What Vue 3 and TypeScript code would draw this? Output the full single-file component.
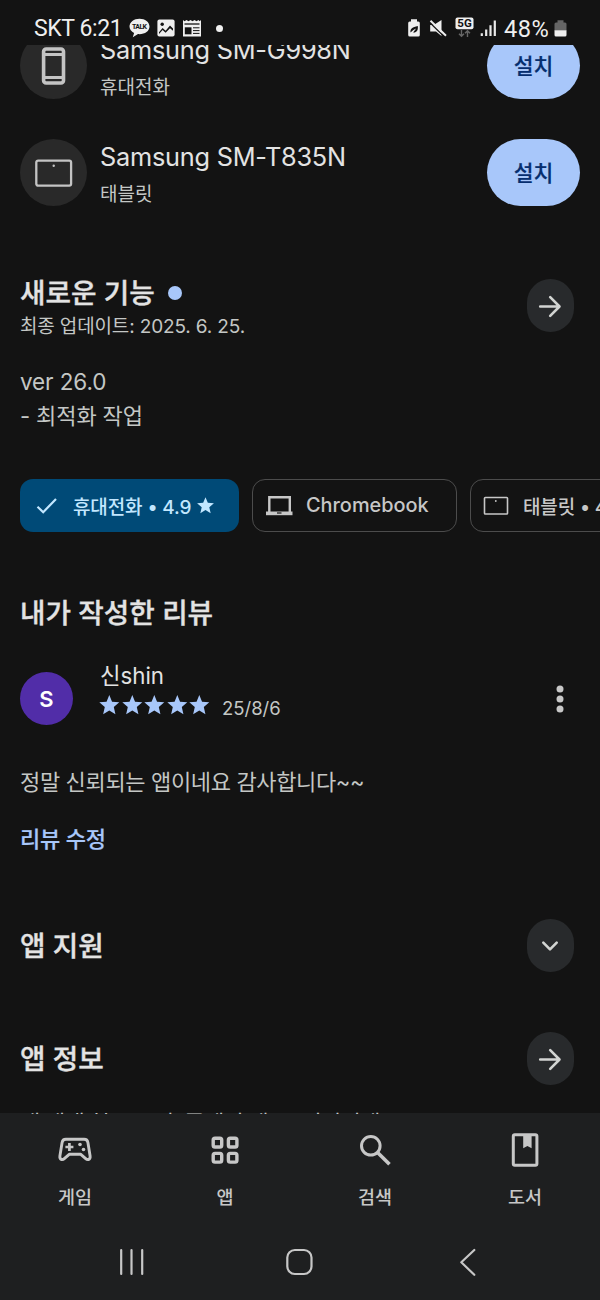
<script setup lang="ts">
interface Device {
  name: string
  kind: string
  icon: 'phone' | 'tablet'
}

interface NavItem {
  label: string
  icon: 'games' | 'apps' | 'search' | 'books'
}

const devices: Device[] = [
  { name: 'Samsung SM-G998N', kind: '휴대전화', icon: 'phone' },
  { name: 'Samsung SM-T835N', kind: '태블릿', icon: 'tablet' },
]

const navItems: NavItem[] = [
  { label: '게임', icon: 'games' },
  { label: '앱', icon: 'apps' },
  { label: '검색', icon: 'search' },
  { label: '도서', icon: 'books' },
]

const star = 'M12 1.200l3 7.200 7.900.7-6 5.200 1.800 7.700-6.700-4.100-6.700 4.100 1.800-7.700-6-5.200 7.900-.7z'
</script>

<template>
  <div class="screen">
    <header class="status">
      <span class="clock">SKT 6:21</span>
      <svg class="s-talk" width="21" height="21" viewBox="0 0 21 21">
        <path d="M10.500 .8C4.900 .8 .5 4.200 .5 8.500c0 2.800 1.900 5.200 4.600 6.500L3.800 19.300l5.200-3.200c6.300.6 11.500-2.800 11.500-7.600C20.500 4.200 16.100 .8 10.500 .8z" fill="#efefef" />
        <text x="10.500" y="10.800" text-anchor="middle" textLength="15" class="talk">TALK</text>
      </svg>
      <svg class="s-img" width="18" height="18" viewBox="0 0 18 18">
        <rect x=".4" y=".5" width="17.200" height="17" rx="2" fill="#efefef" />
        <circle cx="5.200" cy="5.300" r="1.700" fill="#131313" />
        <path d="M2 13.200l3.600-4.200 3 2.800 4.400-5.300 3 3v2.300l-3-2.600-4.400 4.500-3-2.700L2 14.900z" fill="#131313" />
      </svg>
      <svg class="s-news" width="20" height="18" viewBox="0 0 20 18">
        <path d="M1 1l1.500 1.200L4.500 1l2 1.200L8.500 1l2 1.200L12.500 1l2 1.200L16.500 1l1.200 1.200L19 1v16.500H1z" fill="#efefef" />
        <path d="M2.500 5h15" stroke="#131313" stroke-width="1.300" />
        <path d="M2.800 8.300h6.700v7H2.800z" fill="#131313" />
        <path d="M11 8.800h6.500M11 11.600h6.500M11 14.400h6.500" stroke="#131313" stroke-width="1" />
      </svg>
      <i class="s-dot"></i>
      <svg class="s-leaf" width="14" height="18" viewBox="0 0 14 18">
        <path d="M4 .3h6v2.200h1.300q1.500 0 1.500 1.500v12q0 1.500-1.500 1.500H2.700q-1.500 0-1.500-1.500V4q0-1.500 1.500-1.500H4z" fill="#efefef" />
        <path d="M3.500 13.500c-.5-3.800 2-5.500 7.300-6.500.6 4.500-1.500 7-4.700 6.500 1-1.500 2-2.500 3-4-2 .8-3.500 2-5.600 4z" fill="#131313" />
      </svg>
      <svg class="s-mute" width="18" height="18" viewBox="0 0 18 18">
        <path d="M1.200 6h3.500L12.500 1v16L7 12.500H1.200z" fill="#efefef" />
        <path d="M.8 3.500L15 17.500" stroke="#131313" stroke-width="1.300" />
        <path d="M1.500 1.700L17 16.800" stroke="#efefef" stroke-width="2" />
      </svg>
      <svg class="s-5g" width="19" height="21" viewBox="0 0 19 21">
        <rect x=".5" y=".5" width="18" height="11.700" rx="2" fill="#efefef" />
        <text x="9.500" y="10.300" text-anchor="middle" class="fiveg">5G</text>
        <path d="M6.500 13v6M4 16.700l2.500 2.500L9 16.700M12.500 20v-6M10 16.300l2.500-2.500 2.500 2.500" stroke="#666" stroke-width="1.400" fill="none" />
      </svg>
      <svg class="s-signal" width="17" height="17" viewBox="0 0 17 17">
        <path d="M1.800 13.300V16M6.200 9.500V16M10.500 5.300V16M14.800 .5V16" stroke="#e8e8e8" stroke-width="2.200" />
      </svg>
      <span class="percent">48%</span>
      <svg class="s-batt" width="13" height="17" viewBox="0 0 13 17">
        <path d="M3.500 .3h6v2.200H11q1.500 0 1.500 1.500v6.500H.5V4q0-1.500 1.500-1.500h1.500z" fill="#666" />
        <path d="M.5 10.300h12V15q0 1.500-1.500 1.500H2Q.5 16.500 .5 15z" fill="#efefef" />
      </svg>
    </header>

    <main class="content">
      <ul class="devices">
        <li v-for="d in devices" :key="d.name" class="device">
          <span class="round">
            <svg v-if="d.icon === 'phone'" width="28" height="38" viewBox="0 0 28 38">
              <rect x="3.600" y="2" width="19.900" height="34" rx="2.500" fill="none" stroke="#c4c4c4" stroke-width="3.600" />
              <path d="M3.500 7.500h20M3.500 30.500h20" stroke="#c4c4c4" stroke-width="3" />
            </svg>
            <svg v-else width="38" height="28" viewBox="0 0 38 28">
              <rect x="1.300" y="1.600" width="34.800" height="25" rx="1.800" fill="none" stroke="#c4c4c4" stroke-width="2.300" />
              <circle cx="18.700" cy="6.800" r="1.200" fill="#c4c4c4" />
            </svg>
          </span>
          <div class="device-text">
            <div class="device-name">{{ d.name }}</div>
            <div class="device-kind">{{ d.kind }}</div>
          </div>
          <button class="install">설치</button>
        </li>
      </ul>

      <section class="news">
        <div class="news-head">
          <div>
            <h2 class="title">새로운 기능<i class="blue-dot"></i></h2>
            <p class="updated">최종 업데이트: 2025. 6. 25.</p>
          </div>
          <button class="pill">
            <svg width="24" height="24" viewBox="0 0 24 24"><path d="M2.200 12.500h19M12.200 3.200l9.300 9.300-9.300 9.300" /></svg>
          </button>
        </div>
        <p class="notes"><span class="version">ver 26.0</span><br />- 최적화 작업</p>
      </section>

      <div class="chips">
        <div class="chip selected">
          <svg class="c-check" width="22" height="18" viewBox="0 0 22 18"><path d="M1.500 9.700l5.700 5.500L20 2" fill="none" stroke="#c2e7ff" stroke-width="2.200" /></svg>
          <span>휴대전화 <b class="bullet">•</b> 4.9</span>
          <svg class="c-star" width="17" height="17" viewBox="1 1 22 22"><path :d="star" fill="#c2e7ff" /></svg>
        </div>
        <div class="chip chrome">
          <svg width="28" height="22" viewBox="0 0 28 22">
            <path d="M4.300 17V2.300h20.500V17" fill="none" stroke="#c7c7c7" stroke-width="2.400" />
            <path d="M1 16.500h26.500v3.700H1z" fill="#c7c7c7" /><path d="M12 18h4.500" stroke="#131313" stroke-width="1.200" />
          </svg>
          <span>Chromebook</span>
        </div>
        <div class="chip tablet">
          <svg width="26" height="20" viewBox="0 0 26 20">
            <rect x="1.500" y="1.500" width="23" height="16.500" rx=".8" fill="none" stroke="#c7c7c7" stroke-width="1.600" />
            <circle cx="12.800" cy="5" r=".9" fill="#c7c7c7" />
          </svg>
          <span>태블릿 <b class="bullet">•</b> 4.8</span>
        </div>
      </div>

      <section class="review">
        <h2 class="title">내가 작성한 리뷰</h2>
        <div class="author">
          <span class="avatar">S</span>
          <div class="who">
            <div class="nick">신shin</div>
            <div class="rating">
              <svg v-for="n in 5" :key="n" width="22.600" height="22" viewBox="0 0 24 24"><path :d="star" fill="#a8c7fa" /></svg>
              <span class="date">25/8/6</span>
            </div>
          </div>
          <svg class="more" width="8" height="28" viewBox="0 0 8 28" fill="#c7c7c7">
            <circle cx="4" cy="4" r="3.500" /><circle cx="4" cy="14" r="3.500" /><circle cx="4" cy="24" r="3.500" />
          </svg>
        </div>
        <p class="body">정말 신뢰되는 앱이네요 감사합니다~~</p>
        <a class="edit">리뷰 수정</a>
      </section>

      <section class="row support">
        <h2 class="title">앱 지원</h2>
        <button class="pill">
          <svg width="24" height="24" viewBox="0 0 24 24"><path d="M5.300 8.700l6.700 6.700 6.700-6.700" /></svg>
        </button>
      </section>
      <section class="row about">
        <h2 class="title">앱 정보</h2>
        <button class="pill">
          <svg width="24" height="24" viewBox="0 0 24 24"><path d="M2.200 12.500h19M12.200 3.200l9.300 9.300-9.300 9.300" /></svg>
        </button>
      </section>
      <p class="summary">내 생애 첫 스코어, 플레이 앱 .... 디지털앱</p>
    </main>

    <nav class="tabs">
      <a v-for="n in navItems" :key="n.label" class="tab">
        <svg v-if="n.icon === 'games'" width="36" height="36" viewBox="0 0 36 36">
          <path d="M8.800 7.200h18.400c2.200 0 3.300 1 3.700 3.200l2.200 13.500c.5 3.800-2.500 4.500-4.400 2.700l-4.900-4.300H12.200l-4.900 4.300c-1.900 1.800-4.900 1.100-4.400-2.700l2.200-13.500c.4-2.200 1.500-3.200 3.700-3.200z" fill="none" stroke="#c7c7c7" stroke-width="2.900" stroke-linejoin="round" />
          <path d="M12.400 11v8M8.400 15h8" stroke="#c7c7c7" stroke-width="2.700" />
          <circle cx="23" cy="12.500" r="1.800" fill="#c7c7c7" /><circle cx="26.500" cy="17.500" r="1.800" fill="#c7c7c7" />
        </svg>
        <svg v-else-if="n.icon === 'apps'" width="36" height="36" viewBox="0 0 36 36" fill="none" stroke="#c7c7c7" stroke-width="3.400">
          <rect x="6.200" y="6.300" width="8.500" height="8.700" rx="1.800" /><rect x="21.400" y="6.300" width="8.500" height="8.700" rx="1.800" />
          <rect x="6.200" y="21.400" width="8.500" height="8.700" rx="1.800" /><rect x="21.400" y="21.400" width="8.500" height="8.700" rx="1.800" />
        </svg>
        <svg v-else-if="n.icon === 'search'" width="36" height="36" viewBox="0 0 36 36" fill="none" stroke="#c7c7c7">
          <circle cx="13.800" cy="13.800" r="9.300" stroke-width="3" /><path d="M20.300 20.300L32.500 32.300" stroke-width="3.600" />
        </svg>
        <svg v-else width="36" height="36" viewBox="0 0 36 36">
          <rect x="6.300" y="2.700" width="23.600" height="30.600" rx="1.500" fill="none" stroke="#c7c7c7" stroke-width="3" />
          <path d="M16.200 3h8.400v13.200l-4.200-2.100-4.200 2.100z" fill="#c7c7c7" />
        </svg>
        <span>{{ n.label }}</span>
      </a>
    </nav>

    <footer class="system">
      <svg width="28" height="28" viewBox="0 0 28 28"><path d="M3.200 2v24M13.500 2v24M24.200 2v24" /></svg>
      <svg width="28" height="28" viewBox="0 0 28 28"><rect x="1.300" y="2" width="24.200" height="24" rx="7.500" /></svg>
      <svg width="28" height="28" viewBox="0 0 28 28"><path d="M19.300 2L6.300 14.200 19.300 26.800" /></svg>
    </footer>
  </div>
</template>

<style>
html,
body {
  background: #131313;
}
</style>

<style scoped>
.screen {
  width: 600px;
  height: 1300px;
  overflow: hidden;
  display: flex;
  flex-direction: column;
  background: #131313;
  color: #e3e3e3;
  font-family: Inter, 'Noto Sans CJK KR', sans-serif;
}
h2, p, ul { margin: 0; padding: 0; font-weight: normal; }
svg { display: block; flex: none; }
button { border: 0; padding: 0; font: inherit; }

.status {
  height: 45px;
  flex: none;
  display: flex;
  padding-left: 34px;
  color: #efefef;
  font-family: Roboto, sans-serif;
  font-size: 23px;
  line-height: 26px;
  white-space: nowrap;
}
.clock { margin-top: 16px; width: 95px; letter-spacing: -0.4px; }
.s-talk { margin-top: 18px; }
.s-img { margin: 19px 0 0 7px; }
.s-news { margin: 19px 0 0 7px; }
.s-dot { width: 7px; height: 7px; border-radius: 50%; background: #efefef; margin: 25px 0 0 14px; flex: none; }
.s-leaf { margin: 19px 0 0 184px; }
.s-mute { margin: 19px 0 0 8px; }
.s-5g { margin: 17px 0 0 8px; }
.s-signal { margin: 20px 0 0 6px; }
.percent { margin: 16px 0 0 7px; width: 50px; font-size: 23.600px; letter-spacing: 0.500px; }
.s-batt { margin-top: 20px; }
.talk { font: 700 7px Roboto, sans-serif; fill: #131313; }
.fiveg { font: 700 11.500px Roboto, sans-serif; fill: #131313; letter-spacing: 0; }

/* The summary line peeks over the top edge of the tab bar by one pixel. */
.content { height: 1069px; margin-bottom: -1px; position: relative; z-index: 1; flex: none; overflow: hidden; padding-left: 20px; box-sizing: border-box; }
.devices { list-style: none; margin-top: -13px; display: flex; flex-direction: column; gap: 40px; }
.device { display: flex; height: 67px; padding-right: 20px; }
.round { width: 67px; height: 67px; border-radius: 50%; background: #292929; display: flex; align-items: center; justify-content: center; }
.device-text { flex: 1; padding-left: 13px; }
.device-name { font-size: 25.300px; line-height: 36px; letter-spacing: -0.220px; color: #e3e3e3; white-space: nowrap; }
.device-kind { font-size: 19px; line-height: 28px; margin-top: 6px; color: #c4c7c5; }
.install { width: 93px; height: 67px; border-radius: 34px; background: #a8c7fa; color: #062e6f; font-size: 21.500px; line-height: 30px; font-weight: 500; -webkit-text-stroke: 0.2px; }

.title { font-size: 27.700px; line-height: 36px; font-weight: 500; color: #e3e3e3; white-space: nowrap; -webkit-text-stroke: 0.35px; }
.pill { width: 47px; height: 53px; border-radius: 24px; background: #282a2c; display: flex; align-items: center; justify-content: center; flex: none; }
.pill path { fill: none; stroke: #d2d4d2; stroke-width: 2.600; stroke-linecap: round; stroke-linejoin: round; }

.news { margin-top: 73px; }
.news-head { display: flex; justify-content: space-between; padding-right: 26.400px; height: 53px; }
.news-head .title { margin-top: -4px; display: flex; align-items: center; }
.blue-dot { width: 14px; height: 14px; border-radius: 50%; background: #a8c7fa; margin: -1px 0 0 13px; }
.updated { font-size: 19px; line-height: 28px; margin-top: 2px; letter-spacing: -0.150px; color: #c4c7c5; white-space: nowrap; }
.notes { margin-top: 33px; font-size: 22px; line-height: 33.500px; letter-spacing: -0.100px; color: #c4c7c5; }
.version { font-size: 22.500px; }

.chips { display: flex; gap: 13px; margin-top: 46px; width: 700px; }
.chip { height: 53px; box-sizing: border-box; border-radius: 13px; border: 1.500px solid #4c4c4c; display: flex; align-items: center; font-size: 19px; font-weight: 500; color: #c7c7c7; white-space: nowrap; flex: none; }
.chip span { margin-bottom: 1px; }
.selected { width: 219px; background: #004a77; border: 0; color: #c2e7ff; padding-left: 16px; letter-spacing: -0.120px; }
.c-check { margin-right: 15px; }
.c-star { margin-left: 6px; }
.bullet { font-weight: 500; }
.chrome { width: 205px; padding-left: 12px; font-size: 19.900px; }
.chrome span { margin-left: 13px; }
.tablet { width: 219px; padding-left: 12px; }
.tablet span { margin-left: 14px; letter-spacing: -0.150px; }

.review { margin-top: 63px; }
.author { display: flex; margin-top: 41px; height: 53px; padding-right: 36px; }
.avatar { width: 53px; height: 53px; border-radius: 50%; background: #512da8; color: #fff; font-size: 22px; font-weight: 600; line-height: 54px; text-align: center; }
.who { margin: -11px 0 0 27px; flex: 1; }
.nick { font-size: 22.300px; line-height: 30px; }
.rating { display: flex; margin-left: -2px; margin-top: 3px; }
.date { margin: 2px 0 0 11px; font-size: 18.500px; line-height: 24px; color: #c4c7c5; }
.more { margin-top: 13px; }
.body { margin-top: 41px; font-size: 22px; line-height: 33px; letter-spacing: -0.350px; color: #c4c7c5; white-space: nowrap; }
.edit { display: block; margin-top: 24px; font-size: 22px; line-height: 33px; letter-spacing: -0.200px; font-weight: 500; color: #a8c7fa; -webkit-text-stroke: 0.2px; }
.row { display: flex; align-items: center; justify-content: space-between; padding-right: 26.400px; }
.row .title { padding-top: 1px; }
.support { margin-top: 63px; }
.about { margin-top: 60px; }
.summary { margin-top: 22px; font-size: 22px; line-height: 33px; letter-spacing: -0.700px; color: #c4c7c5; white-space: nowrap; }

.tabs { height: 110px; flex: none; display: grid; grid-template-columns: repeat(4, 150px); background: #1e1f20; }
.tab { display: flex; flex-direction: column; align-items: center; padding-top: 19px; font-size: 18.500px; font-weight: 500; line-height: 26px; color: #c7c7c7; }
.tab span { margin-top: 16px; }
.system { flex: 1; display: flex; justify-content: center; gap: 140.500px; padding-top: 25px; background: #1e1f20; }
.system svg { fill: none; stroke: #c7c7c7; stroke-width: 2.200; stroke-linecap: round; stroke-linejoin: round; }
</style>
